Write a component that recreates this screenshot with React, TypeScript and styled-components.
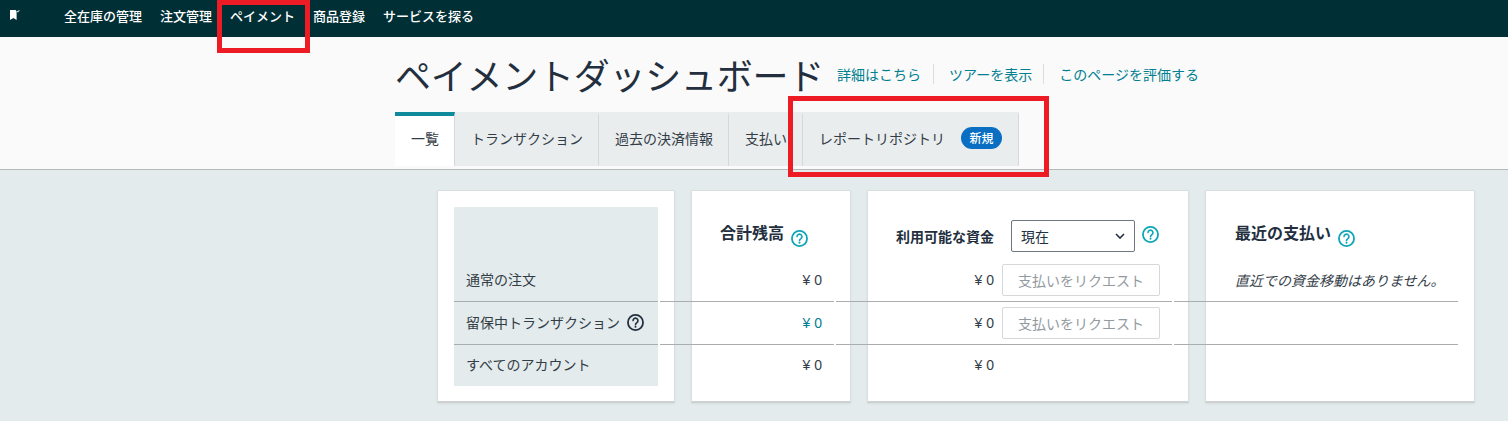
import React from "react";
import styled, { createGlobalStyle } from "styled-components";

const Global = createGlobalStyle`
  html, body { margin: 0; padding: 0; background: #e3ebec; }
  body { font-family: "Noto Sans CJK JP", "Noto Sans", sans-serif; color: #333d47; font-size: 14px; width: 1508px; height: 421px; overflow: hidden; }
  * { box-sizing: border-box; }
`;

const Page = styled.div`
  position: relative;
  width: 1508px;
  height: 421px;
`;

const Nav = styled.nav`
  height: 37px;
  background: #002f36;
  display: flex;
  align-items: center;
  padding-left: 9px;
  padding-bottom: 6px;
`;

const Logo = styled.svg`
  width: 11px;
  height: 11px;
  margin-right: 44px;
`;

const NavLink = styled.a`
  color: #fff;
  font-size: 13px;
  font-weight: 500;
  line-height: 20px;
  margin-right: 18px;
`;

const Header = styled.header`
  height: 133px;
  background: #fafafa;
  border-bottom: 1px solid #b5b9b9;
  padding: 16px 0 0 395px;
`;

const TitleRow = styled.div`
  display: flex;
  align-items: center;
  height: 43px;
  margin-bottom: 16px;
`;

const Title = styled.h1`
  margin: 0 13px 0 0;
  font-size: 36px;
  letter-spacing: -0.25px;
  font-weight: 400;
  line-height: 43px;
  color: #232f3e;
  white-space: nowrap;
`;

const HelpLink = styled.a`
  color: #007f91;
  font-size: 14px;
  line-height: 20px;
  padding: 0 11px 0 15px;
  border-left: 1px solid #ddd;
  position: relative;
  top: -1px;
  &:first-of-type { padding: 0 12px 0 0; border-left: 0; }
`;

const Tabs = styled.div`
  display: flex;
  height: 54px;
`;

const Tab = styled.div<{ $active?: boolean; $w: number }>`
  width: ${p => p.$w}px;
  display: flex;
  align-items: center;
  padding: 0 16px 6px;
  font-size: 14px;
  color: #333d47;
  white-space: nowrap;
  background: ${p => (p.$active ? "#fff" : "#eaedee")};
  border-right: 1px solid #d5d9d9;
  border-top: 4px solid ${p => (p.$active ? "#0f8a9a" : "#eaedee")};
`;

const Badge = styled.span`
  margin-left: 16px;
  width: 43px;
  height: 22px;
  border-radius: 11px;
  background: #0a6fc2;
  color: #fff;
  font-size: 12px;
  font-weight: 500;
  line-height: 22px;
  text-align: center;
`;

const Content = styled.main`
  display: flex;
  gap: 16px;
  padding: 20px 0 0 437px;
`;

const Card = styled.section<{ $w: number }>`
  width: ${p => p.$w}px;
  height: 213px;
  background: #fff;
  border: 1px solid #dadede;
  border-bottom: 2px solid #ccd0d0;
  box-shadow: 0 1px 2px rgba(0, 0, 0, 0.06);
  padding: 16px 16px 0 0;
`;

const LabelCard = styled(Card)`
  padding-left: 16px;
`;

const LabelPanel = styled.div`
  background: #e3ebec;
  height: 179px;
`;

const HeadCell = styled.div<{ $pad?: number }>`
  height: 52px;
  display: flex;
  align-items: flex-start;
  padding-left: ${p => p.$pad ?? 0}px;
`;

const CardTitle = styled.h2`
  margin: 13px 0 0;
  font-size: 16px;
  line-height: 24px;
  font-weight: 700;
  color: #232f3e;
  white-space: nowrap;
`;

const SmallTitle = styled(CardTitle)`
  font-size: 14px;
  margin: 17px 17px 0 0;
`;

const Row = styled.div<{ $last?: boolean }>`
  height: ${p => (p.$last ? 40 : 43)}px;
  border-bottom: ${p => (p.$last ? "0" : "1px solid #aaadad")};
  display: flex;
  align-items: center;
  white-space: nowrap;
`;

const LabelRow = styled(Row)`
  padding: 0 0 2px 12px;
`;

const ValueRow = styled(Row)<{ $end: number }>`
  margin-left: -32px;
  padding-left: ${p => p.$end + 32}px;
`;

const Amount = styled.span<{ $teal?: boolean }>`
  width: 20px;
  font-size: 14px;
  color: ${p => (p.$teal ? "#007f91" : "#333d47")};
  white-space: nowrap;
  display: inline-flex;
  justify-content: flex-end;
  font-family: "Liberation Sans", "Noto Sans CJK JP", sans-serif;
`;

const Yen = styled.span`
  margin-right: 4px;
`;

const RequestButton = styled.button`
  width: 158px;
  height: 32px;
  margin-left: 8px;
  background: #fff;
  border: 1px solid #d5d9d9;
  border-radius: 2px;
  color: #939a9f;
  font: inherit;
  font-size: 14px;
  padding: 0;
`;

const Select = styled.div`
  width: 124px;
  height: 32px;
  margin: 13px 7px 0 0;
  border: 1px solid #6f7880;
  border-radius: 2px;
  display: flex;
  align-items: center;
  justify-content: space-between;
  padding: 0 9px;
  color: #232f3e;
  font-size: 14px;
`;

const NoFunds = styled.em`
  margin-left: 29px;
  color: #333d47;
  font-size: 14px;
`;

const QIcon = styled.svg<{ $dark?: boolean }>`
  width: 17px;
  height: 17px;
  flex: none;
  color: ${p => (p.$dark ? "#232f3e" : "#0ea5b7")};
`;

const RowIcon = styled(QIcon)`
  margin-left: 7px;
`;

const TitleIcon = styled(QIcon)`
  margin: 23px 0 0 7px;
`;

const SelectIcon = styled(QIcon)`
  margin-top: 19px;
`;

const Highlight = styled.div`
  position: absolute;
  border: 5px solid #ed1c24;
  pointer-events: none;
`;

const NavMark = styled(Highlight)`
  left: 217px;
  top: 0;
  width: 93px;
  height: 53px;
`;

const TabMark = styled(Highlight)`
  left: 788px;
  top: 96px;
  width: 261px;
  height: 81px;
`;

const Help = ({ dark, icon: Icon = QIcon }: { dark?: boolean; icon?: any }) => (
  <Icon $dark={dark} viewBox="0 0 18 18" fill="none">
    <circle cx="9" cy="9" r="8" stroke="currentColor" strokeWidth="1.9" />
    <path d="M6.4 7a2.6 2.6 0 1 1 4 2.2c-1 .6-1.4 1-1.4 2.1" stroke="currentColor" strokeWidth="1.7" strokeLinecap="round" />
    <circle cx="9" cy="13.5" r="1.05" fill="currentColor" />
  </Icon>
);

const YenAmount = ({ teal }: { teal?: boolean }) => (
  <Amount $teal={teal}>
    <Yen>¥</Yen>0
  </Amount>
);

export default function App() {
  return (
    <Page>
      <Global />
      <Nav>
        <Logo viewBox="0 0 11 11">
          <path d="M1 0h5.6L7.6 1.5V10L4.4 8 1 10z" fill="#fff" />
          <path d="M7.4 1.2 11 0 9 2.6z" fill="#cfe8e6" />
        </Logo>
        <NavLink>全在庫の管理</NavLink>
        <NavLink>注文管理</NavLink>
        <NavLink>ペイメント</NavLink>
        <NavLink>商品登録</NavLink>
        <NavLink>サービスを探る</NavLink>
      </Nav>
      <Header>
        <TitleRow>
          <Title>ペイメントダッシュボード</Title>
          <HelpLink>詳細はこちら</HelpLink>
          <HelpLink>ツアーを表示</HelpLink>
          <HelpLink>このページを評価する</HelpLink>
        </TitleRow>
        <Tabs>
          <Tab $active $w={60}>一覧</Tab>
          <Tab $w={144}>トランザクション</Tab>
          <Tab $w={130}>過去の決済情報</Tab>
          <Tab $w={74}>支払い</Tab>
          <Tab $w={216}>レポートリポジトリ<Badge>新規</Badge></Tab>
        </Tabs>
      </Header>
      <Content>
        <LabelCard $w={238}>
          <LabelPanel>
            <HeadCell />
            <LabelRow>通常の注文</LabelRow>
            <LabelRow>
              留保中トランザクション
              <Help dark icon={RowIcon} />
            </LabelRow>
            <LabelRow $last>すべてのアカウント</LabelRow>
          </LabelPanel>
        </LabelCard>
        <Card $w={160}>
          <HeadCell $pad={28}>
            <CardTitle>合計残高</CardTitle>
            <Help icon={TitleIcon} />
          </HeadCell>
          <ValueRow $end={110}><YenAmount /></ValueRow>
          <ValueRow $end={110}><YenAmount teal /></ValueRow>
          <ValueRow $end={110} $last><YenAmount /></ValueRow>
        </Card>
        <Card $w={322}>
          <HeadCell $pad={28}>
            <SmallTitle>利用可能な資金</SmallTitle>
            <Select>
              現在
              <svg width="10" height="6" viewBox="0 0 10 6" fill="none">
                <path d="M1 1l4 4 4-4" stroke="#232f3e" strokeWidth="1.6" />
              </svg>
            </Select>
            <Help icon={SelectIcon} />
          </HeadCell>
          <ValueRow $end={106}>
            <YenAmount />
            <RequestButton disabled>支払いをリクエスト</RequestButton>
          </ValueRow>
          <ValueRow $end={106}>
            <YenAmount />
            <RequestButton disabled>支払いをリクエスト</RequestButton>
          </ValueRow>
          <ValueRow $end={106} $last><YenAmount /></ValueRow>
        </Card>
        <Card $w={270}>
          <HeadCell $pad={29}>
            <CardTitle>最近の支払い</CardTitle>
            <Help icon={TitleIcon} />
          </HeadCell>
          <ValueRow $end={0}><NoFunds>直近での資金移動はありません。</NoFunds></ValueRow>
          <ValueRow $end={0} />
          <ValueRow $end={0} $last />
        </Card>
      </Content>
      <NavMark />
      <TabMark />
    </Page>
  );
}
